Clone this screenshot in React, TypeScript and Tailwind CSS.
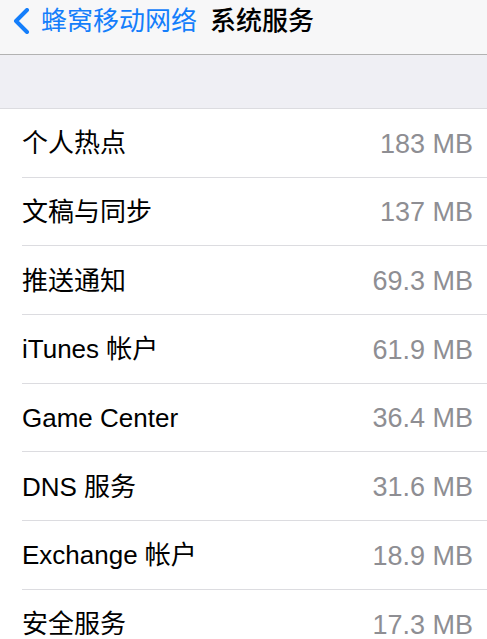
const rows = [
  { label: '个人热点', value: '183 MB' },
  { label: '文稿与同步', value: '137 MB' },
  { label: '推送通知', value: '69.3 MB' },
  { label: 'iTunes 帐户', value: '61.9 MB' },
  { label: 'Game Center', value: '36.4 MB' },
  { label: 'DNS 服务', value: '31.6 MB' },
  { label: 'Exchange 帐户', value: '18.9 MB' },
  { label: '安全服务', value: '17.3 MB' },
];

export default function App() {
  return (
    <div
      className="w-[487px] h-[639px] overflow-hidden bg-[#efeff4]"
      style={{ fontFamily: '"Liberation Sans", "Noto Sans CJK SC", sans-serif' }}
    >
      {/* Nav bar */}
      <div className="h-[55px] bg-[#f7f7f8] border-b border-[#b2b2b2] flex items-start pt-[5px]">
        <div className="flex items-center h-[32px]">
          <svg width="20" height="26" viewBox="0 0 20 26" className="ml-[11px] mr-[10px]">
            <path d="M16 2 L5 13 L16 24" fill="none" stroke="#147efb" strokeWidth="4" strokeLinecap="round" strokeLinejoin="round" />
          </svg>
          <span className="text-[26px] text-[#147efb] leading-none">蜂窝移动网络</span>
          <span className="text-[26px] text-black leading-none ml-[13px] font-medium">系统服务</span>
        </div>
      </div>

      {/* Gray band */}
      <div className="h-[53px]" />

      {/* List */}
      <div className="bg-white border-t border-[#dcdce0]">
        {rows.map((r, i) => (
          <div key={r.label} className="pl-[22px]">
            <div
              className={
                'h-[68.67px] flex items-center justify-between pr-[14px] pt-[2px] ' +
                (i < rows.length - 1 ? 'border-b border-[#dcdce0]' : '')
              }
            >
              <span className="text-[26px] text-black">{r.label}</span>
              <span className="text-[27px] text-[#8e8e93]">{r.value}</span>
            </div>
          </div>
        ))}
      </div>
    </div>
  );
}
